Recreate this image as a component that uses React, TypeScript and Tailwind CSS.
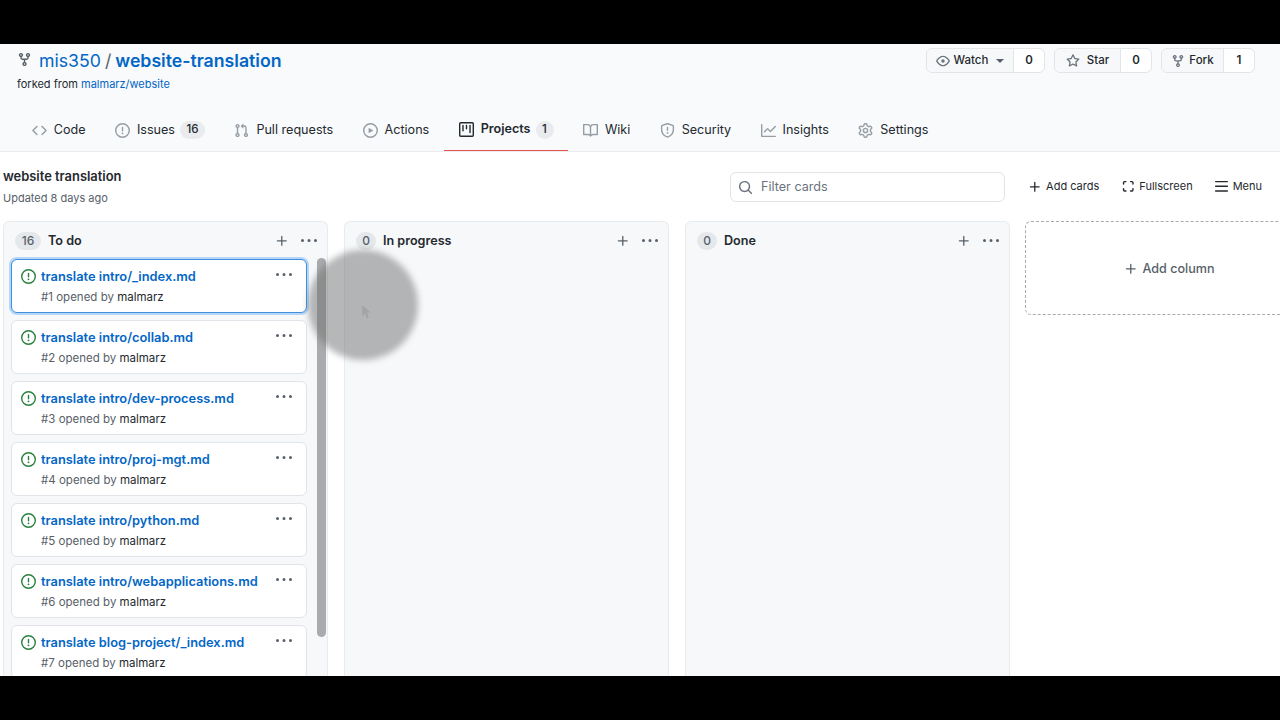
const paths = {
  fork: "M5 3.25a.75.75 0 11-1.5 0 .75.75 0 011.5 0zm0 2.122a2.25 2.25 0 10-1.5 0v.878A2.25 2.25 0 005.75 8.5h1.5v2.128a2.251 2.251 0 101.5 0V8.5h1.5a2.25 2.25 0 002.25-2.25v-.878a2.25 2.25 0 10-1.5 0v.878a.75.75 0 01-.75.75h-4.5A.75.75 0 015 6.25v-.878zm3.75 7.378a.75.75 0 11-1.5 0 .75.75 0 011.5 0zm3-8.75a.75.75 0 100-1.5.75.75 0 000 1.5z",
  code: "M4.72 3.22a.75.75 0 011.06 1.06L2.06 8l3.72 3.72a.75.75 0 11-1.06 1.06L.47 8.53a.75.75 0 010-1.06l4.25-4.25zm6.56 0a.75.75 0 10-1.06 1.06L13.94 8l-3.72 3.72a.75.75 0 101.06 1.06l4.25-4.25a.75.75 0 000-1.06l-4.25-4.25z",
  issue: "M8 1.5a6.5 6.5 0 100 13 6.5 6.5 0 000-13zM0 8a8 8 0 1116 0A8 8 0 010 8zm9 3a1 1 0 11-2 0 1 1 0 012 0zm-.25-6.25a.75.75 0 00-1.5 0v3.5a.75.75 0 001.5 0v-3.5z",
  pull: "M7.177 3.073L9.573.677A.25.25 0 0110 .854v4.792a.25.25 0 01-.427.177L7.177 3.427a.25.25 0 010-.354zM3.75 2.5a.75.75 0 100 1.5.75.75 0 000-1.5zm-2.25.75a2.25 2.25 0 113 2.122v5.256a2.251 2.251 0 11-1.5 0V5.372A2.25 2.25 0 011.5 3.25zM11 2.5h-1V4h1a1 1 0 011 1v5.628a2.251 2.251 0 101.5 0V5A2.5 2.5 0 0011 2.5zm1 10.25a.75.75 0 111.5 0 .75.75 0 01-1.5 0zM3.75 12a.75.75 0 100 1.5.75.75 0 000-1.5z",
  play: "M1.5 8a6.5 6.5 0 1113 0 6.5 6.5 0 01-13 0zM8 0a8 8 0 100 16A8 8 0 008 0zM6.379 5.227A.25.25 0 006 5.442v5.117a.25.25 0 00.379.214l4.264-2.559a.25.25 0 000-.428L6.379 5.227z",
  project: "M1.75 0A1.75 1.75 0 000 1.75v12.5C0 15.216.784 16 1.75 16h12.5A1.75 1.75 0 0016 14.25V1.75A1.75 1.75 0 0014.25 0H1.75zM1.5 1.75a.25.25 0 01.25-.25h12.5a.25.25 0 01.25.25v12.5a.25.25 0 01-.25.25H1.75a.25.25 0 01-.25-.25V1.75zM11.75 3a.75.75 0 00-.75.75v7.5a.75.75 0 001.5 0v-7.5a.75.75 0 00-.75-.75zm-8.25.75a.75.75 0 011.5 0v5.5a.75.75 0 01-1.5 0v-5.5zM8 3a.75.75 0 00-.75.75v3.5a.75.75 0 001.5 0v-3.5A.75.75 0 008 3z",
  book: "M0 1.75A.75.75 0 01.75 1h4.253c1.227 0 2.317.59 3 1.501A3.744 3.744 0 0111.006 1h4.245a.75.75 0 01.75.75v10.5a.75.75 0 01-.75.75h-4.507a2.25 2.25 0 00-1.591.659l-.622.621a.75.75 0 01-1.06 0l-.622-.621A2.25 2.25 0 005.258 13H.75a.75.75 0 01-.75-.75V1.75zm8.755 3a2.25 2.25 0 012.25-2.25H14.5v9h-3.757c-.71 0-1.4.201-1.992.572l.004-7.322zm-1.504 7.324l.004-5.073-.002-2.253A2.25 2.25 0 005.003 2.5H1.5v9h3.757a3.75 3.75 0 011.994.574z",
  shield: "M7.467.133a1.75 1.75 0 011.066 0l5.25 1.68A1.75 1.75 0 0115 3.48V7c0 1.566-.32 3.182-1.303 4.682-.983 1.498-2.585 2.813-5.032 3.855a1.7 1.7 0 01-1.33 0c-2.447-1.042-4.049-2.357-5.032-3.855C1.32 10.182 1 8.566 1 7V3.48a1.75 1.75 0 011.217-1.667l5.25-1.68zm.61 1.429a.25.25 0 00-.153 0l-5.25 1.68a.25.25 0 00-.174.238V7c0 1.358.275 2.666 1.057 3.86.784 1.194 2.121 2.34 4.366 3.297a.2.2 0 00.154 0c2.245-.956 3.582-2.104 4.366-3.298C13.225 9.666 13.5 8.36 13.5 7V3.48a.25.25 0 00-.174-.237l-5.25-1.68zM9 10.5a1 1 0 11-2 0 1 1 0 012 0zm-.25-5.75a.75.75 0 10-1.5 0v3a.75.75 0 001.5 0v-3z",
  graph: "M1.5 1.75a.75.75 0 00-1.5 0v12.5c0 .414.336.75.75.75h14.5a.75.75 0 000-1.5H1.5V1.75zm14.28 2.53a.75.75 0 00-1.06-1.06L10 7.94 7.53 5.47a.75.75 0 00-1.06 0L3.22 8.72a.75.75 0 001.06 1.06L7 7.06l2.47 2.47a.75.75 0 001.06 0l5.25-5.25z",
  gear: "M7.429 1.525a6.593 6.593 0 011.142 0c.036.003.108.036.137.146l.289 1.105c.147.56.55.967.997 1.189.174.086.341.183.501.29.417.278.97.423 1.53.27l1.102-.303c.11-.03.175.016.195.046.219.31.41.641.573.989.014.031.022.11-.059.19l-.815.806c-.411.406-.562.957-.53 1.456a4.588 4.588 0 010 .582c-.032.499.119 1.05.53 1.456l.815.806c.08.08.073.159.059.19a6.494 6.494 0 01-.573.99c-.02.029-.086.074-.195.045l-1.103-.303c-.559-.153-1.112-.008-1.529.27-.16.107-.327.204-.5.29-.449.222-.851.628-.998 1.189l-.289 1.105c-.029.11-.101.143-.137.146a6.613 6.613 0 01-1.142 0c-.036-.003-.108-.037-.137-.146l-.289-1.105c-.147-.56-.55-.967-.997-1.189a4.502 4.502 0 01-.501-.29c-.417-.278-.97-.423-1.53-.27l-1.102.303c-.11.03-.175-.016-.195-.046a6.492 6.492 0 01-.573-.989c-.014-.031-.022-.11.059-.19l.815-.806c.411-.406.562-.957.53-1.456a4.587 4.587 0 010-.582c.032-.499-.119-1.05-.53-1.456l-.815-.806c-.08-.08-.073-.159-.059-.19a6.44 6.44 0 01.573-.99c.02-.029.086-.075.195-.045l1.103.303c.559.153 1.112.008 1.529-.27.16-.107.327-.204.5-.29.449-.222.851-.628.998-1.189l.289-1.105c.029-.11.101-.143.137-.146zM8 0c-.236 0-.47.01-.701.03-.743.065-1.29.615-1.458 1.261l-.29 1.106c-.017.066-.078.158-.211.224a5.994 5.994 0 00-.668.386c-.123.082-.233.09-.3.071L3.27 2.776c-.644-.177-1.392.02-1.82.63a7.977 7.977 0 00-.704 1.217c-.315.675-.111 1.422.363 1.891l.815.806c.05.048.098.147.088.294a6.084 6.084 0 000 .772c.01.147-.038.246-.088.294l-.815.806c-.474.469-.678 1.216-.363 1.891.2.428.436.835.704 1.218.428.609 1.176.806 1.82.63l1.103-.303c.066-.019.176-.011.299.071.213.143.436.272.668.386.133.066.194.158.212.224l.289 1.106c.169.646.715 1.196 1.458 1.26a8.094 8.094 0 001.402 0c.743-.064 1.29-.614 1.458-1.26l.29-1.106c.017-.066.078-.158.211-.224a5.98 5.98 0 00.668-.386c.123-.082.233-.09.3-.071l1.102.302c.644.177 1.392-.02 1.82-.63.268-.382.505-.789.704-1.217.315-.675.111-1.422-.364-1.891l-.814-.806c-.05-.048-.098-.147-.088-.294a6.1 6.1 0 000-.772c-.01-.147.039-.246.088-.294l.814-.806c.475-.469.679-1.216.364-1.891a7.992 7.992 0 00-.704-1.218c-.428-.609-1.176-.806-1.82-.63l-1.103.303c-.066.019-.176.011-.299-.071a5.991 5.991 0 00-.668-.386c-.133-.066-.194-.158-.212-.224L10.16 1.29C9.99.645 9.444.095 8.701.031A8.094 8.094 0 008 0zm1.5 8a1.5 1.5 0 11-3 0 1.5 1.5 0 013 0zM11 8a3 3 0 11-6 0 3 3 0 016 0z",
  eye: "M1.679 7.932c.412-.621 1.242-1.75 2.366-2.717C5.175 4.242 6.527 3.5 8 3.5c1.473 0 2.824.742 3.955 1.715 1.124.967 1.954 2.096 2.366 2.717a.119.119 0 010 .136c-.412.621-1.242 1.75-2.366 2.717C10.825 11.758 9.473 12.5 8 12.5c-1.473 0-2.824-.742-3.955-1.715C2.92 9.818 2.09 8.69 1.679 8.068a.119.119 0 010-.136zM8 2c-1.981 0-3.67.992-4.933 2.078C1.797 5.169.88 6.423.43 7.1a1.619 1.619 0 000 1.798c.45.678 1.367 1.932 2.637 3.024C4.329 13.008 6.019 14 8 14c1.981 0 3.67-.992 4.933-2.078 1.27-1.091 2.187-2.345 2.637-3.023a1.619 1.619 0 000-1.798c-.45-.678-1.367-1.932-2.637-3.023C11.671 2.992 9.981 2 8 2zm0 8a2 2 0 100-4 2 2 0 000 4z",
  star: "M8 .25a.75.75 0 01.673.418l1.882 3.815 4.21.612a.75.75 0 01.416 1.279l-3.046 2.97.719 4.192a.75.75 0 01-1.088.791L8 12.347l-3.766 1.98a.75.75 0 01-1.088-.79l.72-4.194L.818 6.374a.75.75 0 01.416-1.28l4.21-.611L7.327.668A.75.75 0 018 .25zm0 2.445L6.615 5.5a.75.75 0 01-.564.41l-3.097.45 2.24 2.184a.75.75 0 01.216.664l-.528 3.084 2.769-1.456a.75.75 0 01.698 0l2.77 1.456-.53-3.084a.75.75 0 01.216-.664l2.24-2.183-3.096-.45a.75.75 0 01-.564-.41L8 2.694v.001z",
  plus: "M7.75 2a.75.75 0 01.75.75V7h4.25a.75.75 0 110 1.5H8.5v4.25a.75.75 0 11-1.5 0V8.5H2.75a.75.75 0 010-1.5H7V2.75A.75.75 0 017.75 2z",
  kebab: "M8 9a1.5 1.5 0 100-3 1.5 1.5 0 000 3zM1.5 9a1.5 1.5 0 100-3 1.5 1.5 0 000 3zm13 0a1.5 1.5 0 100-3 1.5 1.5 0 000 3z",
  search: "M11.5 7a4.499 4.499 0 11-8.998 0A4.499 4.499 0 0111.5 7zm-.82 4.74a6 6 0 111.06-1.06l3.04 3.04a.75.75 0 11-1.06 1.06l-3.04-3.04z",
  screen: "M3.75 2A1.75 1.75 0 002 3.75v1.5a.75.75 0 001.5 0v-1.5a.25.25 0 01.25-.25h1.5a.75.75 0 000-1.5h-1.5zm6.5 0a.75.75 0 000 1.5h1.5a.25.25 0 01.25.25v1.5a.75.75 0 001.5 0v-1.5A1.75 1.75 0 0011.75 2h-1.5zM3.5 10.25a.75.75 0 00-1.5 0v1.5c0 .966.784 1.75 1.75 1.75h1.5a.75.75 0 000-1.5h-1.5a.25.25 0 01-.25-.25v-1.5zm10 0a.75.75 0 00-1.5 0v1.5a.25.25 0 01-.25.25h-1.5a.75.75 0 000 1.5h1.5A1.75 1.75 0 0013.5 11.75v-1.5z",
  bars: "M1 2.75A.75.75 0 011.75 2h12.5a.75.75 0 110 1.5H1.75A.75.75 0 011 2.75zm0 5A.75.75 0 011.75 7h12.5a.75.75 0 110 1.5H1.75A.75.75 0 011 7.75zM1.75 12a.75.75 0 100 1.5h12.5a.75.75 0 100-1.5H1.75z",
};

function Icon({ name, className }: { name: keyof typeof paths; className: string }) {
  return (
    <svg viewBox="0 0 16 16" fill="currentColor" className={className}>
      <path fillRule="evenodd" d={paths[name]} />
    </svg>
  );
}

const tabs: { name: keyof typeof paths; label: string; count?: string; active?: boolean }[] = [
  { name: "code", label: "Code" },
  { name: "issue", label: "Issues", count: "16" },
  { name: "pull", label: "Pull requests" },
  { name: "play", label: "Actions" },
  { name: "project", label: "Projects", count: "1", active: true },
  { name: "book", label: "Wiki" },
  { name: "shield", label: "Security" },
  { name: "graph", label: "Insights" },
  { name: "gear", label: "Settings" },
];

const cards = [
  "translate intro/_index.md",
  "translate intro/collab.md",
  "translate intro/dev-process.md",
  "translate intro/proj-mgt.md",
  "translate intro/python.md",
  "translate intro/webapplications.md",
  "translate blog-project/_index.md",
];

function RepoButton({ name, label, count, caret, width }: { name: keyof typeof paths; label: string; count: string; caret?: boolean; width: string }) {
  return (
    <div className={`flex h-[25px] items-stretch rounded-md border border-[#e3e6e9] text-[11.5px] font-medium text-[#24292e] ${width}`}>
      <div className="flex flex-1 items-center justify-center gap-[3px] rounded-l-md border-r border-[#e3e6e9] bg-[#f6f8fa] pt-[1px]">
        <Icon name={name} className="h-[14px] w-[14px] text-[#6a737d]" />
        <span className={label === "Star" ? "ml-[4px]" : "ml-[1px]"}>{label}</span>
        {caret && <span className="ml-[5px] h-0 w-0 border-x-[4px] border-t-[4px] border-x-transparent border-t-[#586069]" />}
      </div>
      <div className="flex w-[30px] items-center justify-center rounded-r-md bg-white pt-[1px] font-semibold">{count}</div>
    </div>
  );
}

function Card({ title, index, focused }: { title: string; index: number; focused: boolean }) {
  return (
    <div
      className={`relative h-[54px] w-[296px] shrink-0 rounded-md bg-white pl-[29px] pt-[8px] ${
        focused
          ? "border border-[#3f8fe0] shadow-[0_0_0_2px_#b5d6f5]"
          : "border border-[#e1e4e8]"
      }`}
    >
      <Icon name="issue" className="absolute left-[9px] top-[9px] h-[15px] w-[15px] text-[#28803f]" />
      <div className="text-[12.85px] font-semibold leading-[18px] text-[#0366c6]">{title}</div>
      <div className="mt-[2px] text-[11.5px] leading-[18px] text-[#586069]">
        #{index} opened by <span className="text-[#24292e]">malmarz</span>
      </div>
      <Icon name="kebab" className="absolute right-[14px] top-[7px] h-4 w-4 text-[#586069]" />
    </div>
  );
}

function Column({ count, title, children }: { count: string; title: string; children?: React.ReactNode }) {
  return (
    <div className="flex h-[455px] w-[325px] shrink-0 flex-col rounded-t-md border border-b-0 border-[#e9ecef] bg-[#f6f8fa]">
      <div className="flex h-[37px] shrink-0 items-center pl-[11px] pt-[1px]">
        <span className={`flex h-[18px] items-center justify-center rounded-full bg-[#e5e8eb] text-[12px] font-medium text-[#586069] ${count === "16" ? "w-[26px]" : "w-[20px]"}`}>{count}</span>
        <span className="ml-[7px] text-[12.6px] font-semibold text-[#24292e]">{title}</span>
        <div className="ml-auto mr-[10px] flex items-center gap-[12px] text-[#586069]">
          <Icon name="plus" className="h-[14px] w-[14px]" />
          <Icon name="kebab" className="h-4 w-4" />
        </div>
      </div>
      {children}
    </div>
  );
}

export default function App() {
  return (
    <div className="flex h-[720px] w-[1280px] flex-col overflow-hidden bg-black py-[44px] font-['Inter',sans-serif]">
      <div className="relative h-[632px] shrink-0 overflow-hidden bg-white">
        <header className="h-[108px] border-b border-[#eaecef] bg-[#f8fafc]">
          <div className="flex h-[68px] items-start justify-between pr-[25px]">
            <div className="pl-[17px] pt-[5px]">
              <div className="flex items-center text-[17.7px] leading-[24px] text-[#0366c6]">
                <Icon name="fork" className="mb-[3px] h-[15px] w-[15px] text-[#586069]" />
                <span className="ml-[7px]">mis350</span>
                <span className="mx-[4px] text-[#586069]">/</span>
                <span className="font-semibold">website-translation</span>
              </div>
              <div className="mt-[3px] text-[11px] leading-[16px] text-[#24292e]">
                forked from <span className="text-[#0366c6]">malmarz/website</span>
              </div>
            </div>
            <div className="flex gap-[9px] pt-[4px]">
              <RepoButton name="eye" label="Watch" count="0" caret width="w-[119px]" />
              <RepoButton name="star" label="Star" count="0" width="w-[98px]" />
              <RepoButton name="fork" label="Fork" count="1" width="w-[94px]" />
            </div>
          </div>
          <nav className="flex h-[39px] pl-[17px]">
            {tabs.map((tab) => (
              <div
                key={tab.label}
                className={`flex h-[39px] items-center px-[14.7px] pb-[3px] text-[12.6px] ${
                  tab.active ? "border-b border-[#e5534b] font-semibold text-[#24292e]" : "text-[#24292e]"
                }`}
              >
                <Icon name={tab.name} className={`mr-[7px] h-[15px] w-[15px] ${tab.active ? "text-[#24292e]" : "text-[#959da5]"}`} />
                {tab.label}
                {tab.count && (
                  <span className={`ml-[5px] flex h-[18px] items-center justify-center rounded-full bg-[#e9ebee] text-[11.5px] font-medium ${tab.count === "16" ? "w-[25px]" : "w-[18px]"}`}>
                    {tab.count}
                  </span>
                )}
              </div>
            ))}
          </nav>
        </header>

        <div className="flex h-[69px] items-center justify-between pl-[3px] pr-[18px]">
          <div>
            <div className="mt-[1px] text-[12.9px] font-semibold leading-[20px] text-[#24292e]">website translation</div>
            <div className="mt-[2px] text-[11px] leading-[18px] text-[#586069]">Updated 8 days ago</div>
          </div>
          <div className="flex items-center text-[11px] text-[#24292e]">
            <div className="mr-[23px] flex h-[30px] w-[275px] items-center rounded-md border border-[#e1e4e8] bg-white pl-[7px] pt-[1px] text-[12.6px] text-[#6a737d]">
              <Icon name="search" className="mr-[8px] h-[15px] w-[15px] text-[#6a737d]" />
              Filter cards
            </div>
            <Icon name="plus" className="mr-[4px] h-[14px] w-[14px]" />
            <span>Add cards</span>
            <Icon name="screen" className="ml-[22px] mr-[3px] h-[15px] w-[15px]" />
            <span>Fullscreen</span>
            <Icon name="bars" className="ml-[21px] mr-[4px] h-[15px] w-[15px]" />
            <span>Menu</span>
          </div>
        </div>

        <div className="flex gap-[16px] pl-[3px]">
          <Column count="16" title="To do">
            <div className="flex items-start pl-[7px]">
              <div className="flex w-[296px] flex-col gap-[7px]">
                {cards.map((title, i) => (
                  <Card key={title} title={title} index={i + 1} focused={i === 0} />
                ))}
              </div>
              <div className="-mt-[1px] ml-[10px] h-[379px] w-[9px] rounded-full bg-[#a9abac]" />
            </div>
          </Column>
          <Column count="0" title="In progress" />
          <Column count="0" title="Done" />
          <div className="-ml-[1px] flex h-[94px] w-[288px] shrink-0 items-center justify-center rounded-l-md border-y border-l border-dashed border-[#a5abb1] pt-[2px] text-[12.6px] font-medium text-[#586069]">
            <Icon name="plus" className="mr-[4px] h-[14px] w-[14px]" />
            Add column
          </div>
        </div>

        <div className="absolute left-[308px] top-[206px] h-[110px] w-[110px] rounded-full bg-[#6e7070]/50 blur-[3px]" />
        <svg viewBox="0 0 10 16" className="absolute left-[361px] top-[261px] h-[15px] w-[10px] text-[#a2a5a5]" fill="currentColor">
          <path d="M1 0v12l3-3 2 5 2-1-2-5h4z" />
        </svg>
      </div>
    </div>
  );
}
